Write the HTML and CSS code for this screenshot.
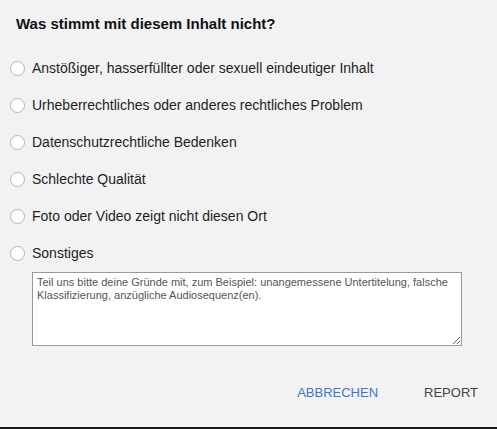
FILE: index.html
```html
<!DOCTYPE html>
<html lang="de">
<head>
<meta charset="utf-8">
<link rel="stylesheet" href="styles.css">
</head>
<body>
<div class="dialog">
  <h1 class="title">Was stimmt mit diesem Inhalt nicht?</h1>
  <div class="options">
    <label class="option"><span class="radio"></span><span class="label">Anstößiger, hasserfüllter oder sexuell eindeutiger Inhalt</span></label>
    <label class="option"><span class="radio"></span><span class="label">Urheberrechtliches oder anderes rechtliches Problem</span></label>
    <label class="option"><span class="radio"></span><span class="label">Datenschutzrechtliche Bedenken</span></label>
    <label class="option"><span class="radio"></span><span class="label">Schlechte Qualität</span></label>
    <label class="option"><span class="radio"></span><span class="label">Foto oder Video zeigt nicht diesen Ort</span></label>
    <label class="option"><span class="radio"></span><span class="label">Sonstiges</span></label>
  </div>
  <textarea class="comment" placeholder="Teil uns bitte deine Gründe mit, zum Beispiel: unangemessene Untertitelung, falsche Klassifizierung, anzügliche Audiosequenz(en)."></textarea>
  <div class="actions">
    <button class="btn cancel">ABBRECHEN</button>
    <button class="btn report">REPORT</button>
  </div>
</div>
<div class="edge"></div>
</body>
</html>
```
FILE: styles.css
```css
html, body {
  margin: 0;
  padding: 0;
  background: #f2f2f2;
  font-family: "Liberation Sans", Arial, sans-serif;
  color: #222;
}
.dialog {
  height: 427px;
  box-sizing: border-box;
  padding: 14px 0 0 0;
  display: flex;
  flex-direction: column;
}
.title {
  margin: 0 0 0 16px;
  font-size: 15px;
  font-weight: bold;
  line-height: 20px;
  color: #111;
}
.options {
  display: flex;
  flex-direction: column;
  margin-top: 24px;
  gap: 17px;
}
.option {
  display: flex;
  align-items: center;
  gap: 7px;
  height: 20px;
  padding-left: 10px;
}
.radio {
  width: 13px;
  height: 13px;
  border-radius: 50%;
  border: 1px solid #b4b4b4;
  background: #fff;
  flex: none;
}
.label {
  font-size: 14px;
  color: #1e1e1e;
}
.comment {
  margin: 9px 0 0 32px;
  width: 430px;
  height: 74px;
  box-sizing: border-box;
  border: 1px solid #999;
  border-radius: 0;
  padding: 3px 4px;
  font-family: "Liberation Sans", Arial, sans-serif;
  font-size: 11px;
  line-height: 13px;
  background: #fff;
  resize: both;
  outline: none;
}
.comment::placeholder {
  color: #555;
}
.actions {
  display: flex;
  justify-content: flex-end;
  gap: 46px;
  margin-top: 38px;
  padding-right: 19px;
}
.btn {
  border: none;
  background: none;
  padding: 0;
  font-family: "Liberation Sans", Arial, sans-serif;
  font-size: 13px;
  line-height: 18px;
}
.cancel { color: #3a78d2; }
.report { color: #444; }
.edge {
  height: 2px;
  background: #1d1a18;
}
```
